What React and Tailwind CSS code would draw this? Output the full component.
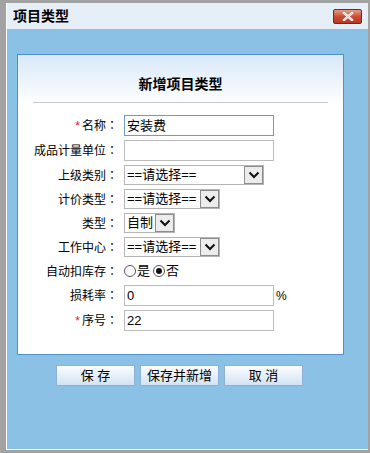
import React from "react";

const font = { fontFamily: '"Liberation Sans", "Noto Sans CJK SC", sans-serif' };

function Chevron() {
    return (
        <svg width="12" height="8" viewBox="0 0 12 8">
            <path d="M1.5 1.5 L6 6 L10.5 1.5" fill="none" stroke="#111" strokeWidth="2" />
        </svg>
    );
}

function Select({ value, width }) {
    return (
        <div className={`flex h-[20px] border border-[#b4b4b4] bg-white ${width}`}>
            <div className="flex-1 pl-[2px] text-[13px] leading-[18px] text-black whitespace-nowrap overflow-hidden">{value}</div>
            <div className="w-[19px] h-[18px] flex items-center justify-center border border-[#8c8c8c] bg-[#ececec]">
                <Chevron />
            </div>
        </div>
    );
}

function Row({ label, req, children }) {
    return (
        <div className="flex items-center">
            <div className="w-[100px] mr-[6px] text-right text-[12px] text-black whitespace-nowrap">
                {req && <span className="text-[#e0202a] mr-[2px]">*</span>}
                {label}
                <span style={{ fontFamily: '"Noto Sans CJK TC", sans-serif' }}>：</span>
            </div>
            <div className="flex items-center">{children}</div>
        </div>
    );
}

function Input({ value, focus }) {
    return (
        <div
            className={`w-[150px] h-[21px] bg-white border pl-[2px] text-[13px] leading-[19px] text-black ${focus ? "border-[#6f9acb]" : "border-[#bcbcbc]"}`}
        >
            {value}
        </div>
    );
}

function Radio({ checked }) {
    return (
        <span className="inline-flex items-center justify-center w-[12px] h-[12px] rounded-full border border-[#555] bg-white">
            {checked && <span className="w-[6px] h-[6px] rounded-full bg-[#111]" />}
        </span>
    );
}

function Btn({ children }) {
    return (
        <div className="w-[79px] h-[21px] flex items-center justify-center border border-[#8fb0d6] bg-gradient-to-b from-[#fbfcfe] to-[#d3e3f3] text-[13px] text-black">
            {children}
        </div>
    );
}

export default function App() {
    return (
        <div className="w-[370px] h-[453px] bg-[#a2a2a2] overflow-hidden pt-[3px] pl-[6px]" style={font}>
            <div className="w-[362px] h-[447px] bg-white pl-[1px] pb-[1px] flex flex-col">
                <div className="h-[26px] bg-[#e6eef8] flex items-center justify-between pl-[6px] pr-[6px]">
                    <span className="text-[14px] font-bold text-black">项目类型</span>
                    <div className="w-[29px] h-[15px] rounded-[2px] border border-[#6b2b22] bg-gradient-to-b from-[#e89a86] via-[#cc4b33] to-[#b53a24] flex items-center justify-center">
                        <svg width="12" height="9" viewBox="0 0 12 9">
                            <path d="M2 1 L10 8 M10 1 L2 8" stroke="#fff" strokeWidth="2.4" strokeLinecap="square" />
                            <path d="M2 1 L10 8 M10 1 L2 8" stroke="#c8c8c8" strokeWidth="0.8" />
                        </svg>
                    </div>
                </div>
                <div className="flex-1 bg-[#8cc1e6] pt-[25px] pl-[10px]">
                    <div className="w-[327px] h-[301px] border border-[#4e8fcc]" style={{ backgroundImage: "linear-gradient(to bottom, #d8e9f8 0px, #ffffff 50px)" }}>
                        <div className="h-[40px] flex items-end justify-center text-[14px] font-bold text-black">新增项目类型</div>
                        <div className="mx-[15px] mt-[7px] border-t border-[#c8c8c8]" />
                        <div className="flex flex-col mt-[12px] gap-[4px]">
                            <Row label="名称" req>
                                <Input value="安装费" focus />
                            </Row>
                            <Row label="成品计量单位">
                                <Input value="" />
                            </Row>
                            <Row label="上级类别">
                                <Select value="==请选择==" width="w-[140px]" />
                            </Row>
                            <Row label="计价类型">
                                <Select value="==请选择==" width="w-[96px]" />
                            </Row>
                            <Row label="类型">
                                <Select value="自制" width="w-[51px]" />
                            </Row>
                            <Row label="工作中心">
                                <Select value="==请选择==" width="w-[96px]" />
                            </Row>
                            <Row label="自动扣库存">
                                <div className="flex items-center text-[13px] text-black h-[20px]">
                                    <Radio />
                                    <span className="ml-[1px] mr-[3px]">是</span>
                                    <Radio checked />
                                    <span className="ml-[1px]">否</span>
                                </div>
                            </Row>
                            <Row label="损耗率">
                                <Input value="0" />
                                <span className="ml-[2px] text-[12px] text-black">%</span>
                            </Row>
                            <Row label="序号" req>
                                <Input value="22" />
                            </Row>
                        </div>
                    </div>
                    <div className="flex gap-[5px] ml-[39px] mt-[10px]">
                        <Btn>保 存</Btn>
                        <Btn>保存并新增</Btn>
                        <Btn>取 消</Btn>
                    </div>
                </div>
            </div>
        </div>
    );
}
